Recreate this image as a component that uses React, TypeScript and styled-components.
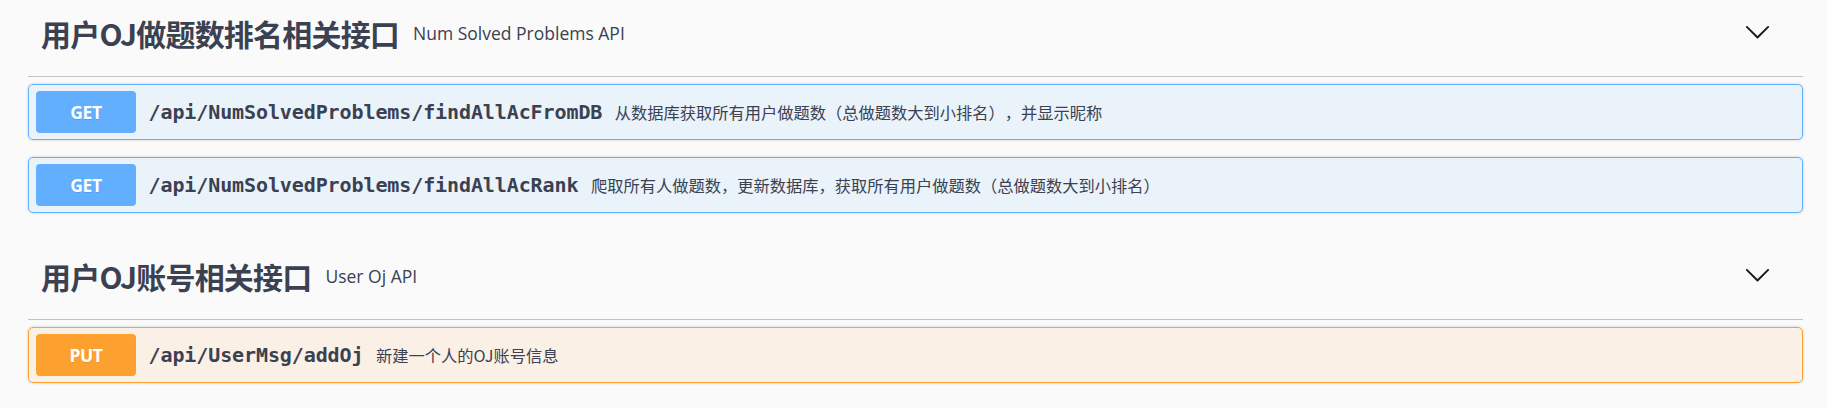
import React from "react";
import styled, { createGlobalStyle } from "styled-components";

const GlobalStyle = createGlobalStyle`
  html, body {
    margin: 0;
    padding: 0;
    background: #fafafa;
  }
  body {
    font-family: "Open Sans", "Noto Sans CJK SC", sans-serif;
    color: #3b4151;
    text-spacing-trim: space-all;
  }
`;

const Page = styled.div`
  padding: 0 24px 0 28px;
  display: flex;
  flex-direction: column;
`;

const Section = styled.section`
  display: flex;
  flex-direction: column;
  & + & {
    margin-top: 13px;
  }
`;

const TagRow = styled.div`
  display: flex;
  align-items: center;
  padding: 13px 32px 23px 13px;
  border-bottom: 1px solid rgba(59, 65, 81, 0.3);
  margin-bottom: 7px;
`;

const TagTitle = styled.span`
  font-family: "Noto Sans CJK SC", "Open Sans", sans-serif;
  font-weight: 700;
  font-size: 30px;
  line-height: 40px;
  letter-spacing: -0.8px;
  color: #3b4151;
  white-space: nowrap;
`;

const TagSmall = styled.small`
  flex: 1;
  font-family: "Open Sans", "Noto Sans CJK SC", sans-serif;
  font-size: 17.5px;
  font-weight: 400;
  color: #3b4151;
  padding-left: 14px;
`;

const Chevron = styled.svg`
  width: 27px;
  height: 27px;
  fill: #1a1a1a;
  margin-top: -3px;
`;

const Operations = styled.div`
  display: flex;
  flex-direction: column;
`;

const colors = {
  GET: { main: "#61affe", bg: "rgba(97,175,254,.1)" },
  PUT: { main: "#fca130", bg: "rgba(252,161,48,.1)" },
} as const;

type Method = keyof typeof colors;

const OpBlock = styled.div<{ $method: Method }>`
  display: flex;
  align-items: center;
  height: 56px;
  box-sizing: border-box;
  padding: 0 7px;
  margin-bottom: 17px;
  border: 1px solid ${(p) => colors[p.$method].main};
  background: ${(p) => colors[p.$method].bg};
  border-radius: 5px;
  box-shadow: 0 0 3px rgba(0, 0, 0, 0.19);
`;

const Badge = styled.span<{ $method: Method }>`
  display: flex;
  align-items: center;
  justify-content: center;
  width: 100px;
  height: 42px;
  border-radius: 4px;
  background: ${(p) => colors[p.$method].main};
  color: #fff;
  font-family: "Open Sans", sans-serif;
  font-weight: 700;
  font-size: 17.5px;
  letter-spacing: -0.4px;
  text-shadow: 0 1px 0 rgba(0, 0, 0, 0.1);
`;

const Path = styled.span`
  font-family: "DejaVu Sans Mono", "Liberation Mono", monospace;
  font-weight: 600;
  font-size: 20px;
  color: #3b4151;
  padding: 0 12.5px;
  letter-spacing: -0.1px;
`;

const Desc = styled.span`
  font-family: "Noto Sans CJK SC", "Open Sans", sans-serif;
  font-size: 16.25px;
  color: #3b4151;
  text-spacing-trim: space-all;
`;

const ArrowIcon = () => (
  <Chevron viewBox="0 0 20 20" aria-hidden="true">
    <path d="M17.418 6.109c.272-.268.709-.268.979 0s.271.701 0 .969l-7.908 7.83c-.27.268-.707.268-.979 0l-7.908-7.830c-.27-.268-.27-.701 0-.969.271-.268.709-.268.979 0L10 13.25l7.418-7.141z" />
  </Chevron>
);

type Op = { method: Method; path: string; desc: string };
type Tag = { title: string; small: string; ops: Op[] };

const tags: Tag[] = [
  {
    title: "用户OJ做题数排名相关接口",
    small: "Num Solved Problems API",
    ops: [
      {
        method: "GET",
        path: "/api/NumSolvedProblems/findAllAcFromDB",
        desc: "从数据库获取所有用户做题数（总做题数大到小排名），并显示昵称",
      },
      {
        method: "GET",
        path: "/api/NumSolvedProblems/findAllAcRank",
        desc: "爬取所有人做题数，更新数据库，获取所有用户做题数（总做题数大到小排名）",
      },
    ],
  },
  {
    title: "用户OJ账号相关接口",
    small: "User Oj API",
    ops: [
      {
        method: "PUT",
        path: "/api/UserMsg/addOj",
        desc: "新建一个人的OJ账号信息",
      },
    ],
  },
];

export default function App() {
  return (
    <>
      <GlobalStyle />
      <Page>
        {tags.map((t) => (
          <Section key={t.title}>
            <TagRow>
              <TagTitle>{t.title}</TagTitle>
              <TagSmall>{t.small}</TagSmall>
              <ArrowIcon />
            </TagRow>
            <Operations>
              {t.ops.map((o) => (
                <OpBlock key={o.path} $method={o.method}>
                  <Badge $method={o.method}>{o.method}</Badge>
                  <Path>{o.path}</Path>
                  <Desc>{o.desc}</Desc>
                </OpBlock>
              ))}
            </Operations>
          </Section>
        ))}
      </Page>
    </>
  );
}
